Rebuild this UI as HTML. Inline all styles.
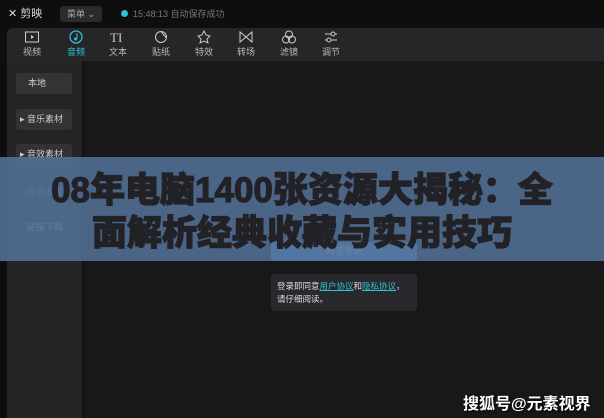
<!DOCTYPE html>
<html><head><meta charset="utf-8"><style>
*{margin:0;padding:0;box-sizing:border-box}
body{width:604px;height:418px;overflow:hidden;background:#0e0e0f;font-family:"Liberation Sans","Noto Sans CJK SC",sans-serif;position:relative;color:#bbb}
.a{position:absolute}
.tb{left:7px;top:28px;width:597px;height:33px;background:#262628;border-radius:5px 0 0 0}
.ti{position:absolute;top:2px;width:30px;text-align:center;font-size:9px;color:#bbb}
.ti svg{display:block;margin:0 auto 1px}
.lp{left:7px;top:61px;width:75px;height:357px;background:#242426}
.main{left:83px;top:61px;width:521px;height:357px;background:#181818}
.btn{position:absolute;left:9px;width:56px;height:21px;background:#333336;border-radius:3px;font-size:9px;color:#ccc;line-height:21px}
.band{left:0;top:157px;width:604px;height:104px;background:rgba(84,114,154,0.86)}
.title{left:0;top:169px;width:604px;text-align:center;font-size:35px;font-weight:900;line-height:43px;color:#222226;-webkit-text-stroke:1.2px #222226;font-family:"Liberation Sans","Noto Sans CJK SC",sans-serif}
</style></head><body>
<div class="a" style="left:8px;top:5px;font-size:11px;color:#ddd">✕ 剪映</div>
<div class="a" style="left:60px;top:6px;width:42px;height:16px;background:#2b2b2e;border-radius:3px;font-size:9px;color:#aaa;line-height:16px;padding-left:7px">菜单 ⌄</div>
<div class="a" style="left:121px;top:10px;width:7px;height:7px;border-radius:50%;background:#2ec2d3"></div>
<div class="a" style="left:133px;top:7px;font-size:9px;color:#777">15:48:13 自动保存成功</div>
<div class="a tb">
 <div class="ti" style="left:10px"><svg width="16" height="14"><rect x="1.5" y="2" width="13" height="10" fill="none" stroke="#ccc"/><path d="M7 5l3 2-3 2z" fill="#ccc"/></svg>视频</div>
 <div class="ti" style="left:54px;color:#2ec2d3"><svg width="16" height="14"><circle cx="8" cy="7" r="6" fill="none" stroke="#2ec2d3" stroke-width="1.3"/><path d="M9 3v6" stroke="#2ec2d3"/><circle cx="7.5" cy="9" r="1.5" fill="#2ec2d3"/></svg>音频</div>
 <div class="ti" style="left:96px"><svg width="18" height="14"><text x="1" y="12" font-size="13" fill="#ccc" font-family="Liberation Serif">TI</text></svg>文本</div>
 <div class="ti" style="left:139px"><svg width="16" height="14"><circle cx="8" cy="7" r="5.5" fill="none" stroke="#ccc"/><path d="M8 1.5l5 6" stroke="#ccc"/></svg>贴纸</div>
 <div class="ti" style="left:182px"><svg width="16" height="14"><path d="M8 1l2 4 4 1-3 3 1 4-4-2-4 2 1-4-3-3 4-1z" fill="none" stroke="#ccc"/></svg>特效</div>
 <div class="ti" style="left:224px"><svg width="16" height="14"><path d="M2 2v10l12-10v10z" fill="none" stroke="#ccc"/></svg>转场</div>
 <div class="ti" style="left:267px"><svg width="16" height="14"><circle cx="8" cy="4.5" r="3.5" fill="none" stroke="#ccc"/><circle cx="5" cy="9.5" r="3.5" fill="none" stroke="#ccc"/><circle cx="11" cy="9.5" r="3.5" fill="none" stroke="#ccc"/></svg>滤镜</div>
 <div class="ti" style="left:309px"><svg width="16" height="14"><path d="M2 4h12M2 10h12" stroke="#ccc"/><circle cx="10" cy="4" r="2" fill="#262628" stroke="#ccc"/><circle cx="6" cy="10" r="2" fill="#262628" stroke="#ccc"/></svg>调节</div>
</div>
<div class="a lp">
 <div class="btn" style="top:12px;padding-left:12px">本地</div>
 <div class="btn" style="top:48px;padding-left:4px">▸ 音乐素材</div>
 <div class="btn" style="top:83px;padding-left:4px">▸ 音效素材</div>
 <div class="a" style="left:20px;top:124px;font-size:9px;color:#4a90d9">抖音收藏</div>
 <div class="a" style="left:20px;top:159px;font-size:9px;color:#aaa">链接下载</div>
</div>
<div class="a main"></div>
<div class="a" style="left:271px;top:242px;width:146px;height:19px;background:#4a88cc;border-radius:3px;font-size:9px;color:#ddd;text-align:center;line-height:19px">抖音登录</div>
<div class="a" style="left:271px;top:274px;width:146px;height:37px;background:#29292d;border-radius:4px;font-size:8.5px;color:#ddd;padding:6px 0 0 6px;line-height:13px">登录即同意<u style="color:#2ec2d3">用户协议</u>和<u style="color:#2ec2d3">隐私协议</u>，<br>请仔细阅读。</div>
<div class="a band"></div>
<div class="a title">08年电脑1400张资源大揭秘：全<br>面解析经典收藏与实用技巧</div>
<div class="a" style="left:463px;top:390px;font-size:16px;font-weight:bold;color:#fff;text-shadow:1px 1px 2px #000">搜狐号@元素视界</div>
</body></html>
